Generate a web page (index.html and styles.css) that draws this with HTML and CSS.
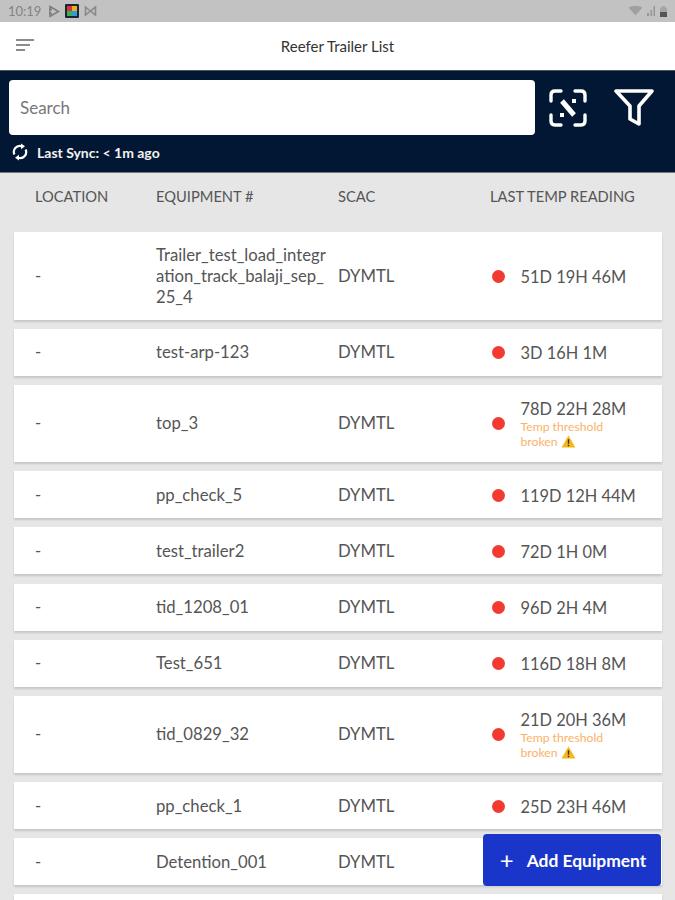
FILE: index.html
```html
<!DOCTYPE html>
<html lang="en">
<head>
    <meta charset="UTF-8">
    <meta name="viewport" content="width=device-width, initial-scale=1.0">
    <title>Reefer Trailer List</title>
    <link rel="stylesheet" href="styles.css">
</head>
<body>
    <div class="status-bar">
        <div class="status-left">
            <span>10:19</span>
            <svg width="12" height="13" viewBox="0 0 12 13"><path d="M2 1.5 L10.5 6.5 L2 11.5 Z M1 4.5 H4 M1 8.5 H4" fill="none" stroke="#7d7d7d" stroke-width="1.5"/></svg>
            <svg width="14" height="14" viewBox="0 0 14 14"><rect width="14" height="14" rx="1" fill="#1d2630"/><rect x="2" y="2" width="5" height="5" fill="#d8343a"/><rect x="7" y="2" width="5" height="5" fill="#e8b020"/><rect x="2" y="7" width="5" height="5" fill="#3fae5a"/><rect x="7" y="7" width="5" height="5" fill="#2d9fd8"/></svg>
            <svg width="13" height="12" viewBox="0 0 13 12"><path d="M1.5 2 L6.5 6 L11.5 2 V10 L6.5 6 L1.5 10 Z" fill="none" stroke="#8a8a8a" stroke-width="1.6"/></svg>
        </div>
        <div class="status-right">
            <svg width="15" height="12" viewBox="0 0 15 12"><path d="M0.5 2.5 Q7.5 -1 14.5 2.5 L7.5 10.5 Z" fill="#a0a0a0"/></svg>
            <svg width="10" height="12" viewBox="0 0 10 12"><path d="M1 11 H3 V8 H1 Z M4.5 11 H6 V5 H4.5 Z M7.5 11 H9 V1 H7.5 Z" fill="#959595"/></svg>
            <svg width="9" height="13" viewBox="0 0 9 13"><path d="M3 1 H6 V2.5 H8 V12 H1 V2.5 H3 Z" fill="#a5a5a5"/><rect x="1" y="7" width="7" height="5" fill="#555"/></svg>
        </div>
    </div>

    <header class="app-bar">
        <svg class="menu-icon" width="18" height="14" viewBox="0 0 18 14"><path d="M0 2 H18 M0 7 H14 M0 12 H9" stroke="#666" stroke-width="1.6" fill="none"/></svg>
        <h1>Reefer Trailer List</h1>
    </header>

    <section class="search-panel">
        <div class="search-row">
            <div class="search-box">Search</div>
            <svg class="scan-icon" width="38" height="38" viewBox="0 0 38 38" fill="none" stroke="#fff" stroke-width="3.4" stroke-linecap="round" stroke-linejoin="round">
                <path d="M2 12 V6 Q2 2 6 2 H12 M26 2 H32 Q36 2 36 6 V12 M36 26 V32 Q36 36 32 36 H26 M12 36 H6 Q2 36 2 32 V26"/>
                <path d="M13 12 L25 26" stroke-width="5" stroke-linecap="butt"/>
                <rect x="23" y="10" width="4" height="4" fill="#fff" stroke="none"/>
                <rect x="11" y="24" width="4" height="4" fill="#fff" stroke="none"/>
            </svg>
            <svg class="filter-icon" width="40" height="37" viewBox="0 0 40 37" fill="none" stroke="#fff" stroke-width="3.6" stroke-linejoin="round">
                <path d="M2 2 H38 L25 17 V35 L16 30 V17 Z"/>
            </svg>
        </div>
        <div class="sync-row">
            <svg width="16" height="18" viewBox="0 0 16 18" fill="none" stroke="#fff" stroke-width="2.2">
                <path d="M2.4 11.5 A6 6 0 0 1 9.5 3.2"/>
                <path d="M13.6 6.5 A6 6 0 0 1 6.5 14.8"/>
                <path d="M9 0.5 L13 3.2 L9 6.2 Z M7 11.8 L3 14.8 L7 17.5 Z" fill="#fff" stroke="none"/>
            </svg>
            <span>Last Sync: &lt; 1m ago</span>
        </div>
    </section>

    <div class="table-head">
        <div class="col-location">LOCATION</div>
        <div class="col-equipment">EQUIPMENT #</div>
        <div class="col-scac">SCAC</div>
        <div class="col-temp-head">LAST TEMP READING</div>
    </div>

    <main class="list">
        <div class="card card-tall">
            <div class="col-location">-</div>
            <div class="col-equipment">Trailer_test_load_integr<br>ation_track_balaji_sep_<br>25_4</div>
            <div class="col-scac">DYMTL</div>
            <div class="col-temp"><span class="dot"></span><div>51D 19H 46M</div></div>
        </div>
        <div class="card">
            <div class="col-location">-</div>
            <div class="col-equipment">test-arp-123</div>
            <div class="col-scac">DYMTL</div>
            <div class="col-temp"><span class="dot"></span><div>3D 16H 1M</div></div>
        </div>
        <div class="card card-warn">
            <div class="col-location">-</div>
            <div class="col-equipment">top_3</div>
            <div class="col-scac">DYMTL</div>
            <div class="col-temp"><span class="dot"></span><div>78D 22H 28M
                <div class="warn">Temp threshold<br>broken <svg width="15" height="13" viewBox="0 0 14 12"><path d="M7 0.5 L13.5 11.5 H0.5 Z" fill="#f5b81c"/><path d="M7 4 V8 M7 9 V10.5" stroke="#40300a" stroke-width="1.3"/></svg></div>
            </div></div>
        </div>
        <div class="card">
            <div class="col-location">-</div>
            <div class="col-equipment">pp_check_5</div>
            <div class="col-scac">DYMTL</div>
            <div class="col-temp"><span class="dot"></span><div>119D 12H 44M</div></div>
        </div>
        <div class="card">
            <div class="col-location">-</div>
            <div class="col-equipment">test_trailer2</div>
            <div class="col-scac">DYMTL</div>
            <div class="col-temp"><span class="dot"></span><div>72D 1H 0M</div></div>
        </div>
        <div class="card">
            <div class="col-location">-</div>
            <div class="col-equipment">tid_1208_01</div>
            <div class="col-scac">DYMTL</div>
            <div class="col-temp"><span class="dot"></span><div>96D 2H 4M</div></div>
        </div>
        <div class="card">
            <div class="col-location">-</div>
            <div class="col-equipment">Test_651</div>
            <div class="col-scac">DYMTL</div>
            <div class="col-temp"><span class="dot"></span><div>116D 18H 8M</div></div>
        </div>
        <div class="card card-warn">
            <div class="col-location">-</div>
            <div class="col-equipment">tid_0829_32</div>
            <div class="col-scac">DYMTL</div>
            <div class="col-temp"><span class="dot"></span><div>21D 20H 36M
                <div class="warn">Temp threshold<br>broken <svg width="15" height="13" viewBox="0 0 14 12"><path d="M7 0.5 L13.5 11.5 H0.5 Z" fill="#f5b81c"/><path d="M7 4 V8 M7 9 V10.5" stroke="#40300a" stroke-width="1.3"/></svg></div>
            </div></div>
        </div>
        <div class="card">
            <div class="col-location">-</div>
            <div class="col-equipment">pp_check_1</div>
            <div class="col-scac">DYMTL</div>
            <div class="col-temp"><span class="dot"></span><div>25D 23H 46M</div></div>
        </div>
        <div class="card">
            <div class="col-location">-</div>
            <div class="col-equipment">Detention_001</div>
            <div class="col-scac">DYMTL</div>
        </div>
        <div class="card"></div>
    </main>

    <button class="add-button"><span class="plus">+</span>Add Equipment</button>
</body>
</html>
```

FILE: styles.css
```css
html, body {
    height: 900px;
}
body {
    font-family: Lato, "Open Sans", sans-serif;
    background-color: #e6e6e6;
    margin: 0;
    padding: 0;
    position: relative;
    overflow: hidden;
    color: #4a4a4a;
}
.status-bar {
    height: 22px;
    background-color: #c2c2c2;
    display: flex;
    justify-content: space-between;
    align-items: center;
    padding: 0 7px 0 8px;
    color: #848484;
    font-size: 13px;
}
.status-left, .status-right {
    display: flex;
    align-items: center;
    gap: 5px;
}
.status-left span {
    margin-right: 2px;
}
.status-right {
    gap: 3px;
}
.app-bar {
    height: 49px;
    background-color: #fff;
    display: flex;
    align-items: center;
    justify-content: center;
    position: relative;
    border-bottom: 1px solid #555;
    box-sizing: border-box;
}
.app-bar h1 {
    font-size: 15px;
    font-weight: 400;
    color: #333;
    margin: 0;
}
.menu-icon {
    position: absolute;
    left: 16px;
    top: 16px;
}
.search-panel {
    height: 102px;
    box-sizing: border-box;
    background-color: #021733;
    padding: 9px 9px 0;
    border-bottom: 1px solid #777;
}
.search-row {
    display: flex;
    align-items: center;
}
.search-box {
    width: 526px;
    height: 55px;
    box-sizing: border-box;
    background-color: #fff;
    border-radius: 4px;
    padding: 0 11px;
    display: flex;
    align-items: center;
    font-size: 17px;
    color: #777;
}
.scan-icon {
    margin-left: 14px;
}
.filter-icon {
    margin-left: 27px;
}
.sync-row {
    display: flex;
    align-items: center;
    gap: 9px;
    margin-top: 8px;
    padding-left: 3px;
    color: #f2f2f2;
    font-size: 14px;
    font-weight: 700;
}
.table-head {
    height: 59px;
    box-sizing: border-box;
    display: flex;
    align-items: center;
    padding: 0 14px 13px;
    font-size: 14.7px;
    color: #555;
}
.col-location {
    width: 121px;
    padding-left: 21px;
    flex-shrink: 0;
    box-sizing: border-box;
    margin-right: 21px;
}
.col-equipment {
    width: 182px;
    flex-shrink: 0;
}
.col-scac {
    width: 152px;
    flex-shrink: 0;
}
.col-temp-head {
    white-space: nowrap;
}
.list {
    display: flex;
    flex-direction: column;
    gap: 9.2px;
    padding: 0 13px 0 14px;
}
.card {
    height: 47px;
    flex-shrink: 0;
    box-sizing: border-box;
    padding-top: 1px;
    background-color: #fff;
    box-shadow: 0 2px 2px rgba(0, 0, 0, 0.14);
    display: flex;
    align-items: center;
    font-size: 16.7px;
    line-height: 21px;
    color: #555;
}
.card-tall {
    height: 87.6px;
}
.card-warn {
    height: 77px;
}
.col-temp {
    display: flex;
    align-items: center;
    gap: 15.5px;
    padding-left: 2px;
    font-size: 16.4px;
}
.dot {
    width: 13px;
    height: 13px;
    border-radius: 50%;
    background-color: #f23a30;
    flex-shrink: 0;
}
.warn {
    font-size: 12.2px;
    line-height: 15px;
    color: #fbb268;
}
.warn svg {
    vertical-align: -2px;
}
.add-button {
    position: absolute;
    left: 483px;
    top: 834px;
    width: 178px;
    height: 52px;
    background-color: #1a35c9;
    color: #fff;
    border: none;
    border-radius: 4px;
    font-family: inherit;
    font-size: 17.4px;
    font-weight: 700;
    display: flex;
    align-items: center;
    justify-content: center;
    gap: 13px;
    padding: 0 0 0 2px;
}
.plus {
    font-size: 24px;
    font-weight: 400;
    line-height: 1;
}
```
